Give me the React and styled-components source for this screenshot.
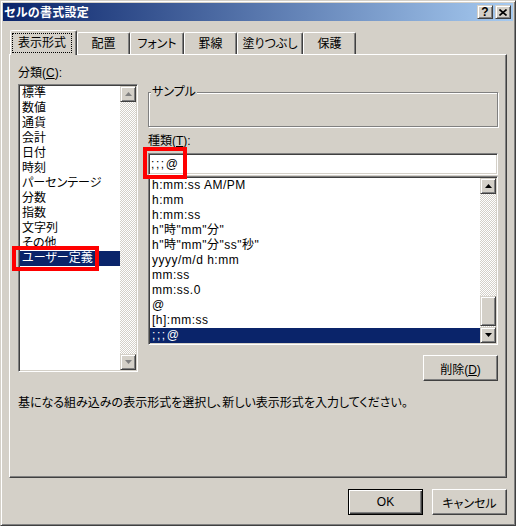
import React from "react";
import styled, { createGlobalStyle, css } from "styled-components";

const face = "#d4d0c8";
const shade = "#808080";
const dark = "#404040";
const navy = "#0a246a";

const GlobalStyle = createGlobalStyle`
  html, body {
    margin: 0;
    padding: 0;
    background: ${face};
  }
  body {
    font-family: "Liberation Sans", "Noto Sans CJK JP", sans-serif;
    font-size: 12px;
    font-feature-settings: "palt";
    color: #000;
  }
  *, *::before, *::after {
    box-sizing: border-box;
  }
`;

const pushRaised = css`
  background: ${face};
  border: 1px solid;
  border-color: #fff ${dark} ${dark} #fff;
  box-shadow: inset -1px -1px 0 ${shade};
`;

const scrollRaised = css`
  background: ${face};
  border: 1px solid;
  border-color: ${face} ${dark} ${dark} ${face};
  box-shadow: inset 1px 1px 0 #fff, inset -1px -1px 0 ${shade};
`;

const sunken = css`
  background: #fff;
  border: 1px solid;
  border-color: ${shade} #fff #fff ${shade};
  box-shadow: inset 1px 1px 0 ${dark}, inset -1px -1px 0 ${face};
  padding: 1px;
`;

// red annotation frame drawn over the screenshot
const redMark = css`
  position: relative;

  &::after {
    content: "";
    position: absolute;
    border: 4px solid #ff0000;
    pointer-events: none;
  }
`;

const Window = styled.div`
  width: 516px;
  height: 526px;
  background: ${face};
  border: 1px solid;
  border-color: ${face} ${dark} ${dark} ${face};
  box-shadow: inset 1px 1px 0 #fff, inset -1px -1px 0 ${shade};
  padding: 2px;
  display: flex;
  flex-direction: column;
`;

const TitleBar = styled.div`
  height: 18px;
  flex: none;
  display: flex;
  align-items: center;
  justify-content: space-between;
  padding: 0 2px 0 1px;
  background: linear-gradient(to right, ${navy}, #a6caf0);
`;

const Title = styled.div`
  color: #fff;
  font-weight: bold;
  font-family: "Noto Sans CJK JP", sans-serif;
  line-height: 18px;
  letter-spacing: 0.3px;
`;

const TitleButtons = styled.div`
  display: flex;
  gap: 2px;
`;

const TitleButton = styled.div`
  ${scrollRaised};
  width: 16px;
  height: 14px;
  display: flex;
  align-items: center;
  justify-content: center;
  font-weight: bold;
  font-size: 12px;
  line-height: 12px;
`;

const Body = styled.div`
  padding: 0 6px;
  display: flex;
  flex-direction: column;
`;

const TabStrip = styled.div`
  margin-top: 9px;
  height: 24px;
  display: flex;
  align-items: flex-end;
  padding-left: 1px;
`;

const Tab = styled.div`
  width: ${(p) => p.$w}px;
  height: ${(p) => (p.$active ? 25 : 22)}px;
  margin-bottom: ${(p) => (p.$active ? -1 : 0)}px;
  position: relative;
  z-index: ${(p) => (p.$active ? 2 : 1)};
  background: ${face};
  border-top: 1px solid #fff;
  border-left: 1px solid #fff;
  border-right: 1px solid ${dark};
  border-top-left-radius: 2px;
  border-top-right-radius: 2px;
  box-shadow: inset -1px 0 0 ${shade};
  display: flex;
  align-items: ${(p) => (p.$active ? "flex-start" : "center")};
  justify-content: center;
  padding-top: ${(p) => (p.$active ? 2 : 0)}px;
  white-space: nowrap;
  line-height: 14px;
`;

const FocusRing = styled.div`
  width: 60px;
  height: 20px;
  margin-left: -3px;
  border: 1px dotted #000;
  display: flex;
  align-items: center;
  justify-content: center;
`;

const Panel = styled.div`
  height: 424px;
  background: ${face};
  border: 1px solid;
  border-color: #fff ${dark} ${dark} #fff;
  box-shadow: inset -1px -1px 0 ${shade};
  padding: 11px 8px 0 8px;
  display: flex;
  flex-direction: column;
`;

const Columns = styled.div`
  display: flex;
  gap: 10px;
  align-items: flex-start;
`;

const LeftCol = styled.div`
  width: 120px;
  display: flex;
  flex-direction: column;
`;

const RightCol = styled.div`
  width: 350px;
  display: flex;
  flex-direction: column;
`;

const Label = styled.div`
  line-height: 14px;
  height: 14px;
  margin-top: ${(p) => p.$mt || 0}px;
  white-space: nowrap;
`;

const ListBox = styled.div`
  ${sunken};
  height: ${(p) => p.$h}px;
  margin-top: ${(p) => p.$mt || 0}px;
  display: flex;
`;

const Items = styled.div`
  flex: 1;
  min-width: 0;
  display: flex;
  flex-direction: column;
  letter-spacing: ${(p) => p.$spacing || 0}px;
`;

const Item = styled.div`
  height: 15px;
  line-height: 15px;
  padding-left: 2px;
  white-space: nowrap;
  background: ${(p) => (p.$selected ? navy : "transparent")};
  color: ${(p) => (p.$selected ? "#fff" : "#000")};
`;

const MarkedItem = styled(Item)`
  ${redMark};

  &::after {
    left: -8px;
    top: -5px;
    width: 87px;
    height: 25px;
  }
`;

const Semis = styled.span`
  letter-spacing: 1.6px;
`;

const ScrollBar = styled.div`
  width: 16px;
  flex: none;
  display: flex;
  flex-direction: column;
  background-image: conic-gradient(${face} 25%, #fff 0 50%, ${face} 0 75%, #fff 0);
  background-size: 2px 2px;
`;

const ScrollButton = styled.div`
  ${scrollRaised};
  width: 16px;
  height: 16px;
  flex: none;
  display: flex;
  align-items: center;
  justify-content: center;
`;

const Track = styled.div`
  flex: 1;
  display: flex;
  flex-direction: column;
  justify-content: flex-end;
  padding-bottom: 1px;
`;

const Thumb = styled.div`
  ${scrollRaised};
  height: 30px;
`;

const GroupFrame = styled.div`
  margin-top: 26px;
  height: 35px;
  border: 1px solid ${shade};
  box-shadow: inset 1px 1px 0 #fff, 1px 1px 0 #fff;
`;

const GroupTitle = styled.div`
  width: max-content;
  margin: -8px 0 0 2px;
  padding: 0 1px;
  line-height: 14px;
  background: ${face};
`;

const TextField = styled.div`
  ${sunken};
  ${redMark};
  height: 22px;
  margin-top: 5px;
  padding: 1px 2px;
  line-height: 18px;

  &::after {
    left: -6px;
    top: -7px;
    width: 44px;
    height: 32px;
  }
`;

const Button = styled.button`
  ${pushRaised};
  width: 75px;
  height: 26px;
  flex: none;
  padding: 0;
  font: inherit;
  color: #000;
  margin-top: ${(p) => p.$mt || 0}px;
  align-self: flex-end;
`;

const DefaultButton = styled(Button)`
  border: 1px solid #000;
  box-shadow: inset 1px 1px 0 #fff, inset -1px -1px 0 ${dark},
    inset -2px -2px 0 ${shade};
`;

const Description = styled.div`
  margin-top: 15px;
  line-height: 14px;
  white-space: nowrap;
`;

const Footer = styled.div`
  margin-top: 11px;
  display: flex;
  justify-content: flex-end;
  gap: 9px;
`;

function Arrow({ up, color = "#000" }) {
  return (
    <svg width="7" height="4" viewBox="0 0 7 4">
      <polygon
        points={up ? "3.5,0 7,4 0,4" : "0,0 7,0 3.5,4"}
        fill={color}
      />
    </svg>
  );
}

const tabs = [
  { label: "表示形式", w: 67 },
  { label: "配置", w: 53 },
  { label: "フォント", w: 54 },
  { label: "罫線", w: 53 },
  { label: "塗りつぶし", w: 66 },
  { label: "保護", w: 53 },
];

const categories = [
  "標準",
  "数値",
  "通貨",
  "会計",
  "日付",
  "時刻",
  "パーセンテージ",
  "分数",
  "指数",
  "文字列",
  "その他",
];

const formats = [
  "h:mm:ss AM/PM",
  "h:mm",
  "h:mm:ss",
  'h"時"mm"分"',
  'h"時"mm"分"ss"秒"',
  "yyyy/m/d h:mm",
  "mm:ss",
  "mm:ss.0",
  "@",
  "[h]:mm:ss",
];

export default function App() {
  return (
    <>
      <GlobalStyle />
      <Window>
        <TitleBar>
          <Title>セルの書式設定</Title>
          <TitleButtons>
            <TitleButton>?</TitleButton>
            <TitleButton>
              <svg width="8" height="7" viewBox="0 0 8 7">
                <path d="M0.5 0.5 L7.5 6.5 M7.5 0.5 L0.5 6.5" stroke="#000" strokeWidth="1.6" />
              </svg>
            </TitleButton>
          </TitleButtons>
        </TitleBar>

        <Body>
          <TabStrip>
            {tabs.map((t, i) => (
              <Tab key={t.label} $w={t.w} $active={i === 0}>
                {i === 0 ? <FocusRing>{t.label}</FocusRing> : t.label}
              </Tab>
            ))}
          </TabStrip>

          <Panel>
            <Columns>
              <LeftCol>
                <Label>
                  分類(<u>C</u>):
                </Label>
                <ListBox $h={288} $mt={4}>
                  <Items>
                    {categories.map((c) => (
                      <Item key={c}>{c}</Item>
                    ))}
                    <MarkedItem $selected>ユーザー定義</MarkedItem>
                  </Items>
                  <ScrollBar>
                    <ScrollButton>
                      <Arrow up color={shade} />
                    </ScrollButton>
                    <Track />
                    <ScrollButton>
                      <Arrow color={shade} />
                    </ScrollButton>
                  </ScrollBar>
                </ListBox>
              </LeftCol>

              <RightCol>
                <GroupFrame>
                  <GroupTitle>サンプル</GroupTitle>
                </GroupFrame>
                <Label $mt={7}>
                  種類(<u>T</u>):
                </Label>
                <TextField>
                  <Semis>;;;</Semis>@
                </TextField>
                <ListBox $h={169} $mt={1}>
                  <Items $spacing={0.5}>
                    {formats.map((f) => (
                      <Item key={f}>{f}</Item>
                    ))}
                    <Item $selected>
                      <Semis>;;;</Semis>@
                    </Item>
                  </Items>
                  <ScrollBar>
                    <ScrollButton>
                      <Arrow up />
                    </ScrollButton>
                    <Track>
                      <Thumb />
                    </Track>
                    <ScrollButton>
                      <Arrow />
                    </ScrollButton>
                  </ScrollBar>
                </ListBox>
                <Button $mt={10}>
                  削除(<u>D</u>)
                </Button>
              </RightCol>
            </Columns>

            <Description>
              基になる組み込みの表示形式を選択し、新しい表示形式を入力してください。
            </Description>
          </Panel>

          <Footer>
            <DefaultButton>OK</DefaultButton>
            <Button>キャンセル</Button>
          </Footer>
        </Body>
      </Window>
    </>
  );
}
